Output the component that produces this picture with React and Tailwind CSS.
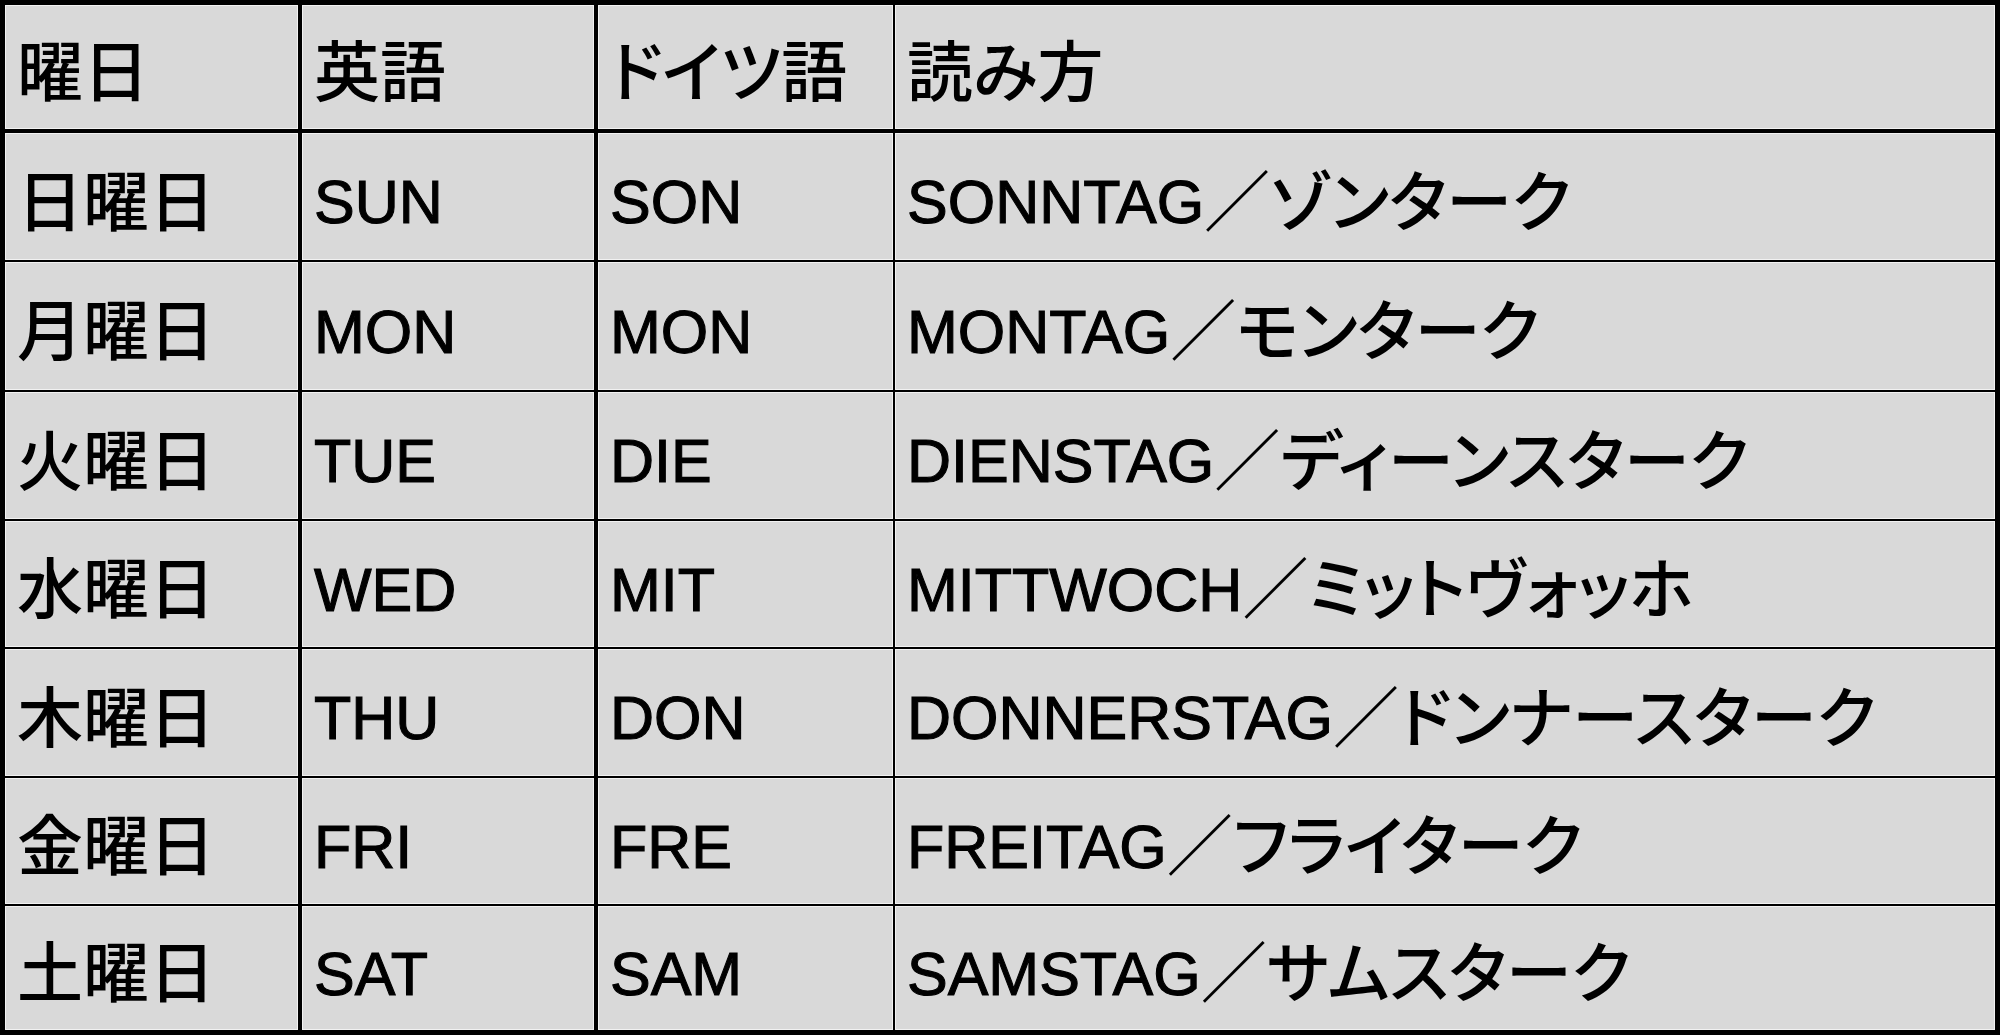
const rows = [
  ['日曜日', 'SUN', 'SON', 'SONNTAG／ゾンターク', 'h-[129px] border-b-2'],
  ['月曜日', 'MON', 'MON', 'MONTAG／モンターク', 'h-[130px] border-b-2'],
  ['火曜日', 'TUE', 'DIE', 'DIENSTAG／ディーンスターク', 'h-[129px] border-b-2'],
  ['水曜日', 'WED', 'MIT', 'MITTWOCH／ミットヴォッホ', 'h-[128px] border-b-2'],
  ['木曜日', 'THU', 'DON', 'DONNERSTAG／ドンナースターク', 'h-[129px] border-b-2'],
  ['金曜日', 'FRI', 'FRE', 'FREITAG／フライターク', 'h-[128px] border-b-2'],
  ['土曜日', 'SAT', 'SAM', 'SAMSTAG／サムスターク', 'h-[124px]'],
];

const cellBase =
  'flex items-center pl-3 pt-3 border-black bg-[#d9d9d9] shadow-[inset_0_0_0_1px_#f2f2f2]';

// latin runs are set a bit smaller and heavier than the kana/kanji, like the PGothic original
function Text({ value }) {
  return value.split(/([\x00-\x7F]+)/).map((part, i) =>
    i % 2 === 1 ? (
      <span key={i} className="text-[61px] [-webkit-text-stroke:1.1px_black]">
        {part}
      </span>
    ) : (
      part
    )
  );
}

function Row({ cells, height }) {
  return (
    <div className="grid grid-cols-[297px_296px_297px_1fr]">
      <div className={`${cellBase} ${height} border-r-4`}><Text value={cells[0]} /></div>
      <div className={`${cellBase} ${height} border-r-4`}><Text value={cells[1]} /></div>
      <div className={`${cellBase} ${height} border-r-2`}><Text value={cells[2]} /></div>
      <div className={`${cellBase} ${height}`}><Text value={cells[3]} /></div>
    </div>
  );
}

export default function App() {
  return (
    <div className="w-[2000px] h-[1035px] bg-black">
      <div className="border-[5px] border-black font-['Liberation_Sans','Noto_Sans_CJK_JP',sans-serif] text-[66px] font-medium leading-none text-black whitespace-nowrap [font-feature-settings:'palt']">
        <Row cells={['曜日', '英語', 'ドイツ語', '読み方']} height="h-[128px] border-b-4" />
        {rows.map((r) => (
          <Row key={r[0]} cells={r.slice(0, 4)} height={r[4]} />
        ))}
      </div>
    </div>
  );
}
